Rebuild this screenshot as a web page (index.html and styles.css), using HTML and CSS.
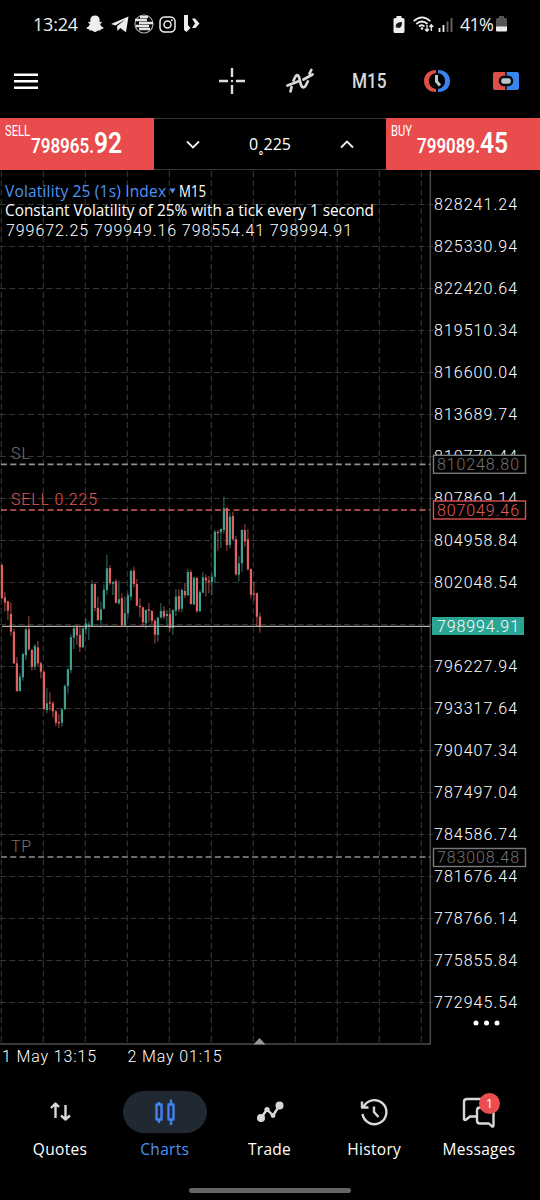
FILE: index.html
```html
<!DOCTYPE html>
<html lang="en">
<head>
  <meta charset="UTF-8">
  <meta name="viewport" content="width=device-width, initial-scale=1.0">
  <title>Charts</title>
  <link rel="stylesheet" href="styles.css">
</head>
<body>

  <!-- Status bar -->
  <div class="status">
    <span class="clock">13:24</span>
    <svg class="ghost" width="18" height="18" viewBox="0 0 18 18"><path fill="#eee" d="M9 .5c3 0 4.700 2 4.700 4.700v2l1.600-.4.6.9-1.800 1.400c.6 2 1.700 3 3.400 3.600l-.4 1-2.200.6-.6 1.300-2.300-.1L9 17.200l-3-1.700-2.300.1-.6-1.300-2.200-.6-.4-1C2.200 12.100 3.300 11.100 3.900 9.100L2.100 7.700l.6-.9 1.600.4v-2C4.300 2.500 6 .5 9 .5z"/></svg>
    <svg class="plane" width="18" height="17" viewBox="0 0 18 17"><path fill="#eee" d="M0 8 17.500.5 15 16.200 9.300 12 6.500 15 6 10.200 14 3.500 4.500 9.400z"/></svg>
    <svg class="globe" width="20" height="20" viewBox="0 0 20 20"><circle cx="10" cy="10" r="9" fill="none" stroke="#aaa" stroke-width="1.200"/><path stroke="#e4e4e4" stroke-width="2.500" d="M1 6h12M5 9h14M2 12h13M5 15h11M6 3h8"/></svg>
    <svg class="insta" width="17" height="17" viewBox="0 0 17 17"><g fill="none" stroke="#eee" stroke-width="1.500"><rect x="1" y="1" width="15" height="15" rx="4.500"/><circle cx="8.500" cy="8.500" r="3.500"/></g><circle cx="12.800" cy="4.200" r="1" fill="#eee"/></svg>
    <svg class="play" width="17" height="18" viewBox="0 0 17 18"><path fill="#eee" d="M1 0h4v10L7.500 13 3.500 17 1 15z"/><path fill="#eee" d="M9 3.500h3L16.500 8.500 12.500 13H9l3-4.500z"/></svg>
    <svg class="saver" width="12" height="17" viewBox="0 0 12 17"><path fill="#eee" d="M3.500 0h5v2H10q1.500 0 1.500 1.500v12Q11.500 17 10 17H2Q.5 17 .5 15.500v-12Q.5 2 2 2h1.500z"/><path d="M3 12c-1-4 1-5.500 6-6 0 5-2 7-5 5.500L7 8.500z" fill="#111"/></svg>
    <svg class="wifi" width="21" height="17" viewBox="0 0 21 17"><g fill="none" stroke="#eee" stroke-width="1.700"><path d="M.7 5.200Q9 -2.500 17.300 5.200M3.300 8Q9 3 14.500 8M6 10.500Q9 8 11.500 10.500"/><path stroke-width="1.300" d="M14 9v6M12 13l2 2.300 2-2.300M18.300 15V9M16.500 11l1.800-2.200 2 2.200"/></g><circle cx="9" cy="12.500" r="1.300" fill="#eee"/></svg>
    <svg class="signal" width="15" height="15" viewBox="0 0 15 15"><path stroke="#eee" stroke-width="1.800" d="M1.500 11v4M5.500 8v7"/><path stroke="#666" stroke-width="1.800" d="M9.500 4.500V15M13.500 1v14"/></svg>
    <span class="percent">41%</span>
    <svg class="batt" width="11" height="16" viewBox="0 0 11 16"><path fill="#555" d="M3 0h5v2h1.500Q11 2 11 3.500V11H0V3.500Q0 2 1.500 2H3z"/><path fill="#eee" d="M0 10.500h11v3.800q0 1.200-1.200 1.200H1.200Q0 15.500 0 14.300z"/></svg>
  </div>

  <!-- Toolbar -->
  <div class="toolbar">
    <svg class="menu" width="24" height="17" viewBox="0 0 24 17"><path stroke="#fff" stroke-width="2.600" d="M0 1.800h24M0 8.300h24M0 14.800h24"/></svg>
    <svg class="cross" width="28" height="28" viewBox="0 0 28 28"><path stroke="#ddd" stroke-width="2.400" d="M14 1v9M14 18v9M1 14h9M18 14h9"/><circle cx="14" cy="14" r="1.200" fill="#ddd"/></svg>
    <svg class="indicator" width="28" height="26" viewBox="0 0 28 26"><g fill="none" stroke="#d8d8d8" stroke-width="2.700" stroke-linecap="round" stroke-linejoin="round"><path d="M4.500 23.500 5.500 19M7.500 12.500 9.500 8.500Q11.500 5.500 13 9L15 17Q16.500 21 19.500 18L21.800 13.500"/><path d="M1.500 17.500 12 13.500M17.500 11.500 26.500 6.500M23.500 5.500 25.300 2"/></g></svg>
    <span class="frame">M15</span>
    <svg class="timer" width="28" height="24" viewBox="0 0 28 24"><path fill="#dc5048" d="M13 1C5 1 1 6 1 12s4 11 12 11v-3C8 19 6 16 6 12s2-7 7-8z"/><path fill="#3a84ee" d="M15 1c8 0 12 5 12 11s-4 11-12 11v-3c5-1 7-4 7-8s-2-7-7-8z"/><path fill="none" stroke="#b9c9cc" stroke-width="3" d="M13.500 6v6.500L17 16.500"/></svg>
    <svg class="order" width="28" height="20" viewBox="0 0 28 20"><path fill="#dc5048" d="M3 1h10.300v18H3q-2 0-2-2V3q0-2 2-2z"/><path fill="#3a84ee" d="M14.700 1H25q2 0 2 2v14q0 2-2 2H14.700z"/><rect x="8" y="6" width="12" height="8" rx="3.500" fill="#b8c6ca" stroke="#070b10" stroke-width="2.400"/></svg>
  </div>

  <!-- One click trading -->
  <div class="trade">
    <div class="side sell"><small>SELL</small><span class="price">798965.<b>92</b></span></div>
    <div class="volume">
      <svg width="14" height="9" viewBox="0 0 14 9"><path d="M1 1.500 7 7.500 13 1.500"/></svg>
      <span>0<i>˳</i>225</span>
      <svg width="14" height="9" viewBox="0 0 14 9"><path d="M1 7.500 7 1.500 13 7.500"/></svg>
    </div>
    <div class="side buy"><small>BUY</small><span class="price">799089.<b>45</b></span></div>
  </div>

  <!-- Chart, y units are the same as the page -->
  <svg class="chart" id="chart" width="540" height="900" viewBox="0 170 540 900">
    <g id="grid" class="grid"></g>
    <path class="frame-line" d="M430.300 171V1044M0 1044H430.800"/>
    <path fill="#999" d="M253.500 1044.500 259.500 1038 265.500 1044.500z"/>
    <g id="candles"></g>
    <path class="level" d="M1 464.300H430M1 857H430"/>
    <path class="level red" d="M1 510H430"/>
    <path class="bid" d="M2 626.300H430"/>
    <g id="scale" class="num"></g>
    <g class="num">
      <text x="11" y="459" textLength="19" class="dim">SL</text>
      <text x="11" y="504.500" textLength="86" class="warn">SELL 0.225</text>
      <text x="11" y="852" textLength="20" class="dim">TP</text>
    </g>
    <g class="num">
      <rect x="433.500" y="455.300" width="92" height="18" class="tag"/>
      <text x="437" y="470" textLength="82" class="dim">810248.80</text>
      <rect x="433.500" y="501" width="92" height="18" class="tag tag-red"/>
      <text x="437" y="515.700" textLength="82" class="warn">807049.46</text>
      <rect x="432" y="617" width="92" height="18" fill="#2aa493"/>
      <text x="437" y="632" textLength="82">798994.91</text>
      <rect x="433.500" y="848.500" width="92" height="18" class="tag"/>
      <text x="437" y="863" textLength="82" class="dim">783008.48</text>
      <text x="6" y="236" textLength="346">799672.25 799949.16 798554.41 798994.91</text>
      <text x="2" y="1061.500" textLength="94">1 May 13:15</text>
      <text x="127.500" y="1061.500" textLength="94">2 May 01:15</text>
    </g>
    <g class="hand">
      <text x="5" y="196.500" textLength="161" class="blue">Volatility 25 (1s) Index</text>
      <path fill="#4d94f5" d="M169.500 188.500h6l-3 5z"/>
      <text x="179" y="196.500" textLength="27" lengthAdjust="spacingAndGlyphs">M15</text>
      <text x="5" y="215.500" textLength="369" lengthAdjust="spacingAndGlyphs">Constant Volatility of 25% with a tick every 1 second</text>
    </g>
    <g fill="#fff"><circle cx="476" cy="1023" r="2.500"/><circle cx="486.500" cy="1023" r="2.500"/><circle cx="497" cy="1023" r="2.500"/></g>
  </svg>

  <!-- Bottom navigation -->
  <div class="nav">
    <a class="item">
      <span class="pill"><svg width="24" height="22" viewBox="0 0 24 22"><path d="M7.500 17V3M3 7l4.500-4.500L11 6M17.500 4v14M13 14.500l4.500 4 4.500-4"/></svg></span>
      Quotes
    </a>
    <a class="item active">
      <span class="pill"><svg width="24" height="28" viewBox="0 0 24 28"><path d="M3.500 6.500h5v15h-5zM6 4v3M6 21v4M15.500 6.500h5v15h-5zM18 1.500v5M18 21v6"/></svg></span>
      Charts
    </a>
    <a class="item">
      <span class="pill"><svg width="28" height="24" viewBox="0 0 28 24"><path d="M5 18 11 9.500 17 15.500 23.500 5.500"/><g fill="#d8d8d8" stroke="none"><circle cx="5" cy="18" r="4"/><circle cx="11" cy="9.500" r="2.600"/><circle cx="17" cy="15.500" r="2.400"/><circle cx="23.500" cy="5.500" r="4"/></g></svg></span>
      Trade
    </a>
    <a class="item">
      <span class="pill"><svg width="28" height="28" viewBox="0 0 28 28"><path d="M3.500 9A12 12 0 1 1 2.500 16M2 3.500V9.500H8.500M14 8.500V14L18.500 19"/></svg></span>
      History
    </a>
    <a class="item">
      <span class="pill"><svg width="34" height="32" viewBox="0 0 34 32"><path d="M15 20.500H8L3.500 24Q2 24 2 22.500V6Q2 3 5 3H23Q26 3 26 6V11M18 11.500H28.500Q31.500 11.500 31.500 14.500V29.500Q31.500 31 30 30.500L27 27.500H18Q15 27.500 15 24.500V14.500Q15 11.500 18 11.500z"/></svg><em class="badge">1</em></span>
      Messages
    </a>
  </div>
  <div class="handle"></div>

  <script>
    const grid = document.getElementById("grid");
    const scale = document.getElementById("scale");
    let gridPath = "";

    for (let x = 1.3; x < 430; x += 42) gridPath += `M${x} 171V1044`;
    // Price labels, one every 42px
    for (let i = 0; i < 20; i++) {
      const y = 204.5 + i * 42;
      gridPath += `M0 ${y}H433`;
      if (i === 10) continue; // covered by the bid tag
      const price = (828241.24 - i * 2910.3).toFixed(2);
      scale.innerHTML += `<text x="434" y="${y + 5}" textLength="83">${price}</text>`;
    }
    grid.innerHTML = `<path d="${gridPath}"/>`;

    // high, body top, body bottom, low, up - in thirds of a pixel below y=480
    const candles = [
      [253,255,355,356,0],[335,352,368,395,0],[362,364,392,420,0],[367,402,455,467,0],
      [445,455,550,552,0],[532,550,633,636,0],[580,590,633,635,1],[518,522,592,602,1],
      [442,448,526,540,1],[409,448,508,512,0],[506,510,560,572,0],[492,498,560,570,1],
      [483,502,550,558,0],[545,550,575,595,0],[570,575,687,690,0],[625,670,690,700,1],
      [637,667,671,692,0],[664,670,694,713,0],[690,694,728,738,0],[702,726,730,744,0],
      [685,688,728,740,1],[613,618,688,690,1],[565,568,618,640,1],[463,472,570,580,1],
      [442,445,473,507,1],[435,442,466,495,0],[442,464,502,516,0],[442,445,502,504,1],
      [415,430,448,464,1],[425,434,438,480,1],[300,312,438,439,1],[310,312,384,394,0],
      [350,384,420,423,0],[365,388,420,442,1],[313,329,386,388,1],[225,265,330,346,1],
      [255,264,310,315,0],[304,307,311,345,1],[298,304,368,371,0],[302,358,370,374,1],
      [340,354,436,438,0],[350,400,436,438,1],[340,346,400,415,1],[268,273,350,362,1],
      [260,272,312,322,0],[297,312,377,379,0],[355,377,382,412,0],[380,382,427,440,0],
      [388,390,430,446,1],[369,388,392,428,0],[390,393,422,432,0],[418,422,464,490,0],
      [410,413,465,485,1],[369,393,413,415,1],[378,393,410,418,0],[390,402,408,440,1],
      [385,402,444,455,0],[388,390,444,465,1],[327,350,392,408,1],[328,348,388,396,0],
      [325,330,386,396,1],[308,333,346,354,0],[267,276,346,348,1],[270,276,372,374,0],
      [290,293,373,376,1],[291,294,394,398,0],[330,337,394,395,1],[277,292,338,340,1],
      [284,293,302,350,0],[288,302,306,340,0],[280,290,306,345,1],[150,155,290,308,1],
      [150,156,160,212,0],[145,147,157,204,1],[50,85,150,160,1],[82,84,195,212,0],
      [98,110,195,205,1],[95,108,178,181,0],[168,178,283,287,0],[228,250,284,305,1],
      [147,150,250,275,1],[132,150,184,200,0],[147,178,268,272,0],[265,267,344,356,0],
      [306,340,344,362,0],[338,340,410,440,0],[398,410,438,458,0]
    ];

    const toY = v => (480 + v / 3).toFixed(1);
    document.getElementById("candles").innerHTML = candles.map((c, i) => {
      const x = (1.9 + i * 3).toFixed(2);
      return `<g class="${c[4] ? "up" : "down"}"><path class="wick" d="M${x} ${toY(c[0])}V${toY(c[3])}"/><path class="body" d="M${x} ${toY(c[1])}V${toY(c[2])}"/></g>`;
    }).join("");
  </script>
</body>
</html>
```
FILE: styles.css
```css
/* Basic styling */
* {
  box-sizing: border-box;
}
body {
  margin: 0;
  width: 540px;
  height: 1200px;
  background: #000;
  color: #fff;
  font-family: "Open Sans", sans-serif;
  overflow: hidden;
}
svg {
  display: block;
  flex: none;
}

/* Status bar */
.status {
  display: flex;
  align-items: center;
  height: 48px;
  padding: 0 33px;
  font-size: 18px;
  color: #eee;
}
.clock {
  width: 47px;
  letter-spacing: -0.2px;
}
.ghost { margin-left: 6px; }
.plane { margin-left: 7px; }
.globe { margin-left: 5px; }
.insta { margin-left: 5px; }
.play { margin-left: 7px; }
.saver { margin-left: auto; }
.wifi { margin-left: 8px; }
.signal { margin-left: 4px; }
.percent {
  width: 33px;
  margin-left: 7px;
  letter-spacing: -0.8px;
}
.batt { margin-left: 3px; }

/* Toolbar */
.toolbar {
  display: flex;
  align-items: center;
  height: 70px;
  padding: 0 20px 4px 14px;
}
.cross { margin-left: 180px; }
.indicator { margin-left: 40px; }
.frame {
  width: 34px;
  margin: 0 37px 0 38px;
  font: 500 20px Roboto, sans-serif;
  color: #d8d8d8;
  transform: scaleX(0.86);
  transform-origin: left;
}
.order { margin-left: 41px; }

/* One click trading */
.trade {
  display: flex;
  height: 52px;
  font-family: Roboto, sans-serif;
}
.side {
  width: 154px;
  padding: 6px 5px;
  background: #e94c4c;
}
.side small {
  display: block;
  font-size: 14px;
  line-height: 15px;
  transform: scaleX(0.8);
  transform-origin: left;
}
.price {
  display: block;
  margin: -10px 0 0 26px;
  font-size: 20px;
  font-weight: 600;
  line-height: 28px;
  white-space: nowrap;
  transform: scaleX(0.848);
  transform-origin: left;
}
.price b {
  font-size: 29px;
  font-weight: 600;
}
.volume {
  flex: 1;
  display: flex;
  align-items: center;
  justify-content: space-between;
  padding: 0 32px;
  border: solid #32373d;
  border-width: 1px 0;
  font: 16px "Open Sans", sans-serif;
}
.volume i {
  font-style: normal;
}
.volume path {
  fill: none;
  stroke: #eee;
  stroke-width: 1.8;
}

/* Chart */
.grid path {
  fill: none;
  stroke: #353535;
  stroke-width: 1.1;
  stroke-dasharray: 6 3.3;
}
.frame-line {
  fill: none;
  stroke: #4b4b52;
  stroke-width: 1.4;
}
.level {
  stroke: #909094;
  stroke-width: 1.7;
  stroke-dasharray: 6 3.3;
}
.level.red {
  stroke: #dc5e5e;
}
.bid {
  stroke: #b5b0a8;
  stroke-width: 1.3;
}
.wick {
  stroke-width: 1;
  opacity: 0.75;
}
.body {
  stroke-width: 2.2;
}
.up { stroke: #3f9e8e; }
.down { stroke: #e2605f; }
.num {
  font: 300 16px Roboto, sans-serif;
  fill: #fff;
}
.num .dim { fill: #747474; }
.num .warn { fill: #e25a5a; }
.tag {
  fill: #000;
  stroke: #77797b;
  stroke-width: 1.4;
}
.tag-red { stroke: #dd5050; }
.hand {
  font: 15.5px "Open Sans", sans-serif;
  fill: #fff;
}
.hand .blue { fill: #4d94f5; }

/* Bottom navigation */
.nav {
  display: flex;
  justify-content: space-between;
  height: 118px;
  padding: 21px 19px 0 18px;
}
.item {
  display: flex;
  flex-direction: column;
  align-items: center;
  width: 84px;
  font-size: 15.5px;
  line-height: 32px;
  letter-spacing: 0.3px;
}
.pill {
  position: relative;
  display: flex;
  align-items: center;
  justify-content: center;
  width: 84px;
  height: 42px;
  border-radius: 21px;
}
.item path {
  fill: none;
  stroke: #d8d8d8;
  stroke-width: 2.4;
  stroke-linejoin: round;
}
.active {
  color: #4d94f5;
}
.active .pill {
  background: #202832;
}
.item.active path {
  stroke: #3f82f0;
}
.badge {
  position: absolute;
  left: 42px;
  top: 2px;
  width: 21px;
  height: 21px;
  border-radius: 50%;
  background: #eb4d50;
  color: #fff;
  font-size: 13px;
  font-style: normal;
  line-height: 21px;
  text-align: center;
}
.handle {
  width: 162px;
  height: 5px;
  margin-left: 189px;
  border-radius: 3px;
  background: #666;
}
```
